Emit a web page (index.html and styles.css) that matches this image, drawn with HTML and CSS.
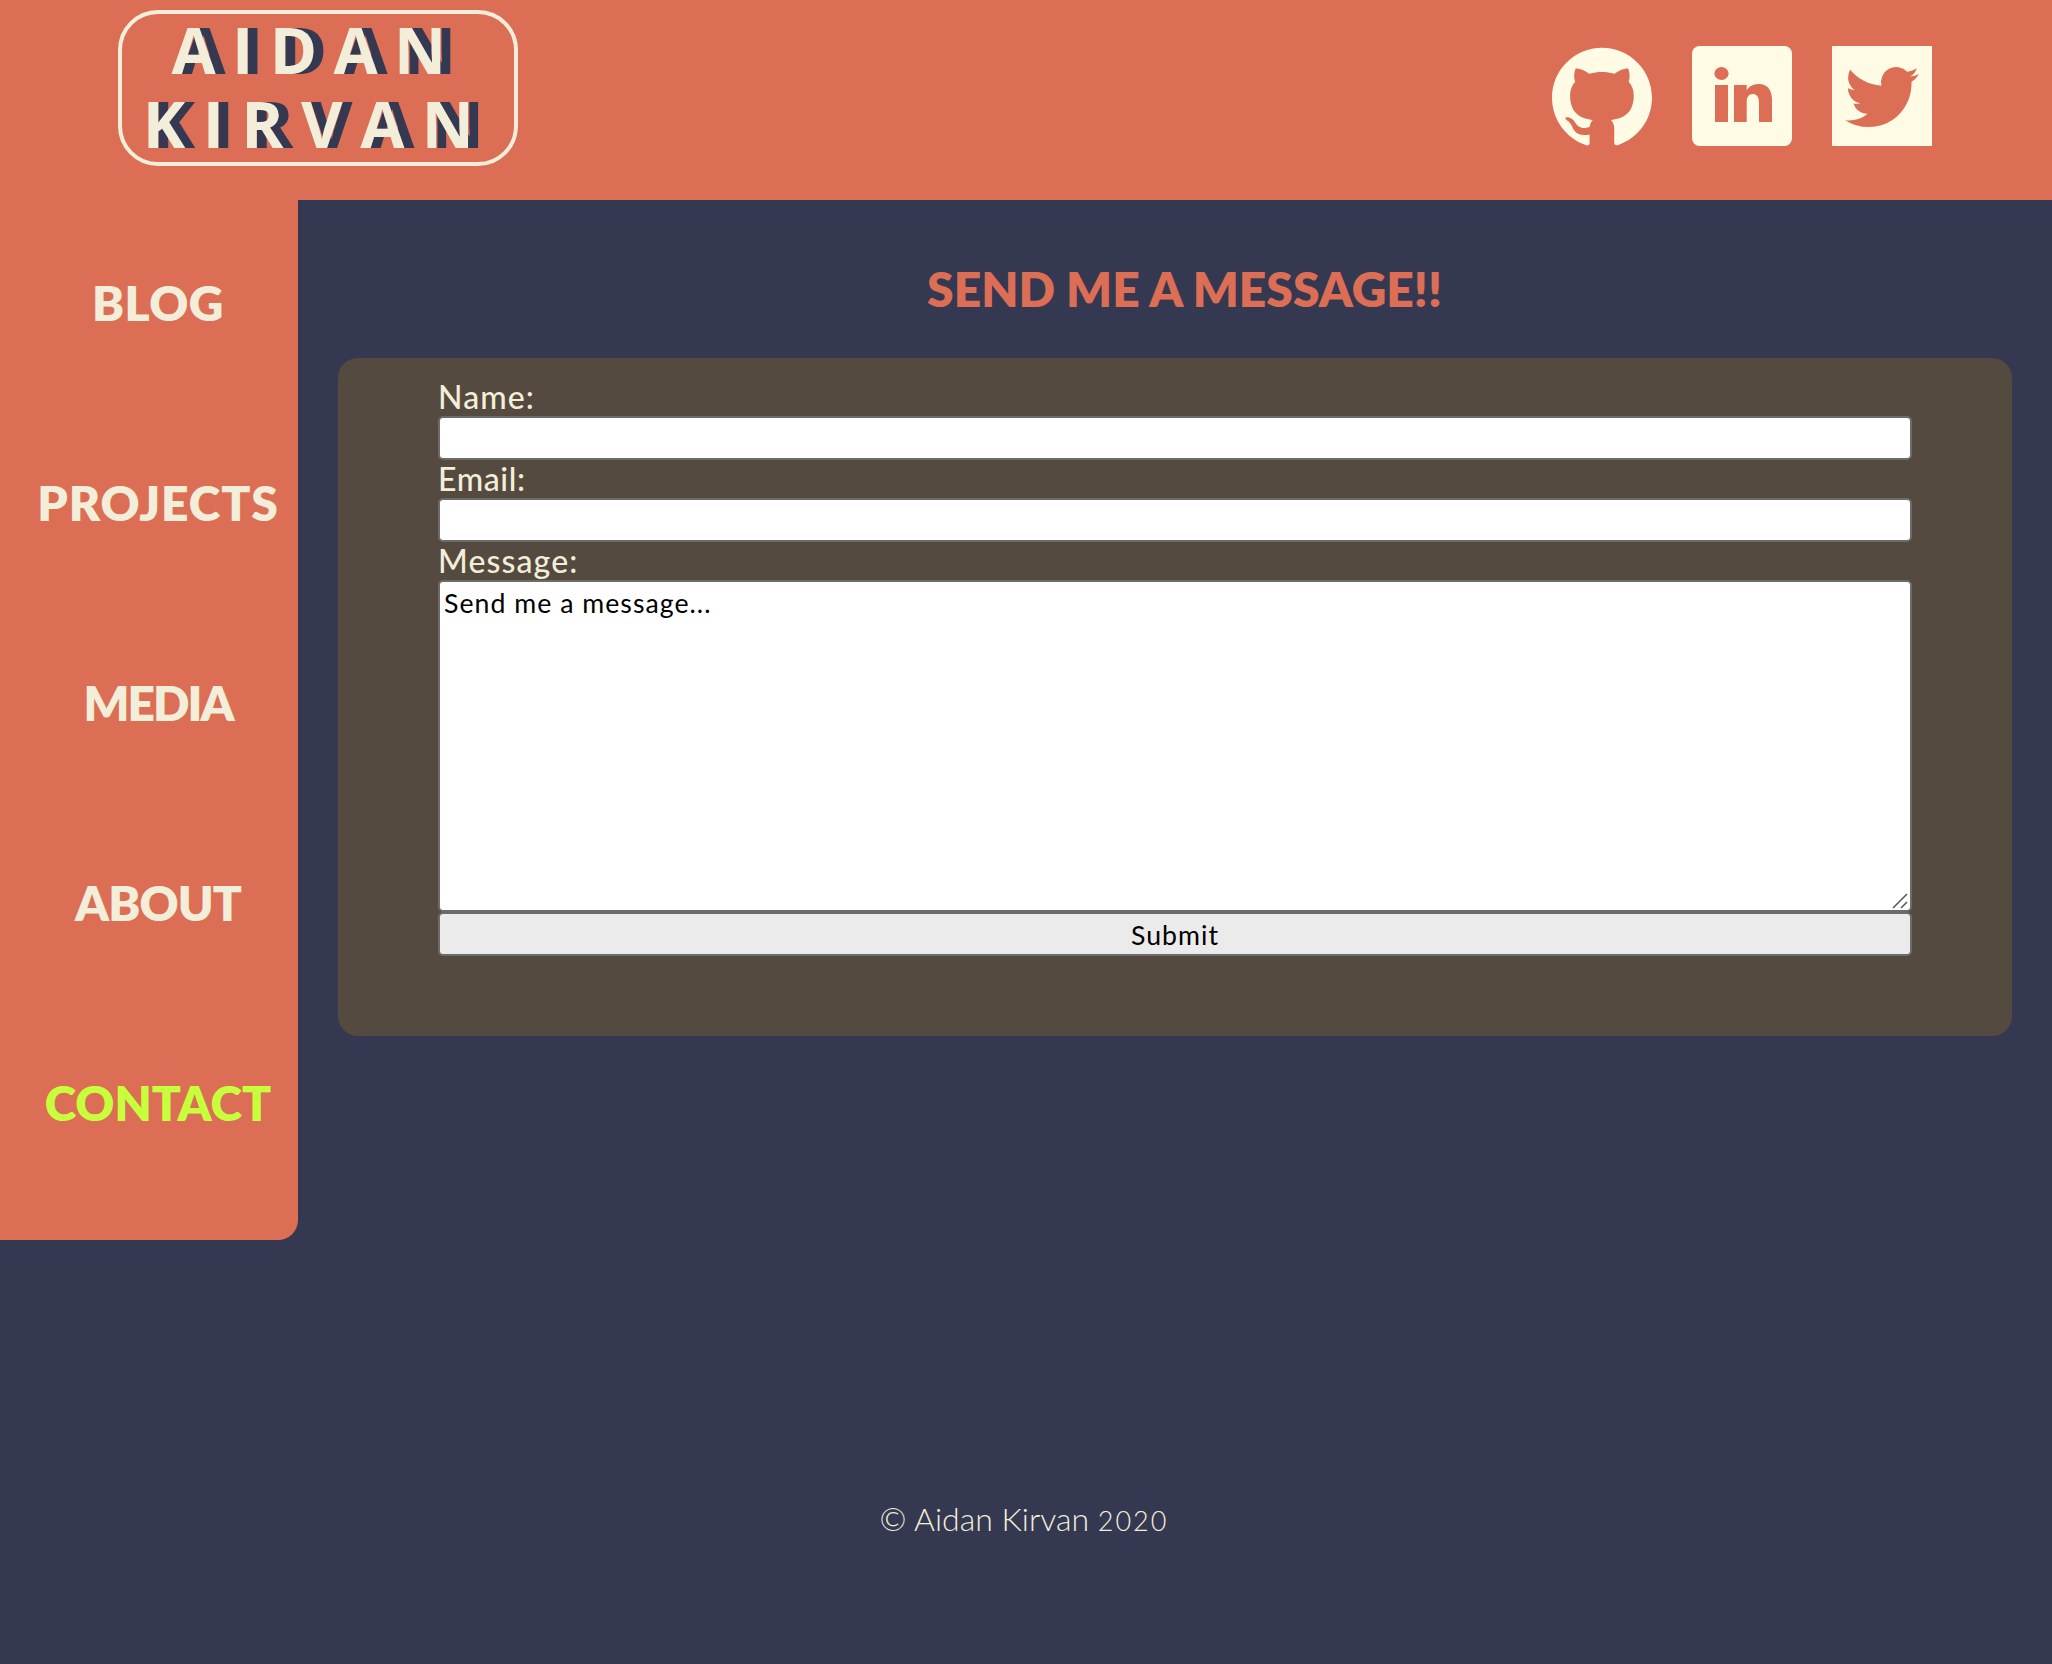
FILE: index.html
```html
<!DOCTYPE html>
<html lang="en">
<head>
<meta charset="utf-8">
<title>Aidan Kirvan - Contact</title>
<link rel="stylesheet" href="styles.css">
</head>
<body>
<header class="header">
  <a class="logo"><span class="first">AIDAN</span><span class="last">KIRVAN</span></a>
  <div class="social">
    <svg class="social-icon" viewBox="0 -0.15 24 24" aria-label="GitHub"><path d="M12 .297c-6.63 0-12 5.373-12 12 0 5.303 3.438 9.8 8.205 11.385.6.113.82-.258.82-.577 0-.285-.01-1.04-.015-2.04-3.338.724-4.042-1.61-4.042-1.61C4.422 18.07 3.633 17.7 3.633 17.7c-1.087-.744.084-.729.084-.729 1.205.084 1.838 1.236 1.838 1.236 1.07 1.835 2.809 1.305 3.495.998.108-.776.417-1.305.76-1.605-2.665-.3-5.466-1.332-5.466-5.93 0-1.31.465-2.38 1.235-3.22-.135-.303-.54-1.523.105-3.176 0 0 1.005-.322 3.3 1.23.96-.267 1.98-.399 3-.405 1.02.006 2.04.138 3 .405 2.28-1.552 3.285-1.23 3.285-1.23.645 1.653.24 2.873.12 3.176.765.84 1.23 1.91 1.23 3.22 0 4.61-2.805 5.625-5.475 5.92.42.36.81 1.096.81 2.22 0 1.606-.015 2.896-.015 3.286 0 .315.21.69.825.57C20.565 22.092 24 17.592 24 12.297c0-6.627-5.373-12-12-12"/></svg>
    <svg class="social-icon" viewBox="0 0 100 100" aria-label="LinkedIn"><rect width="100" height="100" rx="7.5"/><g class="cutout"><ellipse cx="29.5" cy="27.5" rx="7.1" ry="6.5"/><path d="M23 39h13v37H23zM42 39h12.7v5.4c1.8-3.2 5.6-6.4 11.8-6.4C76 38 80 44.500 80 54v22H67V57c0-5.400-1.700-9-6-9-4.600 0-6.300 3.500-6.300 8v20H42z"/></g></svg>
    <svg class="social-icon" viewBox="0 0 100 100" aria-label="Twitter"><rect width="100" height="100"/><path class="cutout" transform="translate(13.100 14.100) scale(3.080)" d="M23.953 4.57a10 10 0 01-2.825.775 4.958 4.958 0 002.163-2.723c-.951.555-2.005.959-3.127 1.184a4.92 4.92 0 00-8.384 4.482C7.69 8.095 4.067 6.13 1.64 3.162a4.822 4.822 0 00-.666 2.475c0 1.71.87 3.213 2.188 4.096a4.904 4.904 0 01-2.228-.616v.06a4.923 4.923 0 003.946 4.827 4.996 4.996 0 01-2.212.085 4.936 4.936 0 004.604 3.417 9.867 9.867 0 01-6.102 2.105c-.39 0-.779-.023-1.17-.067a13.995 13.995 0 007.557 2.209c9.053 0 13.998-7.496 13.998-13.985 0-.21 0-.42-.015-.63A9.935 9.935 0 0024 4.59z"/></svg>
  </div>
</header>
<div class="content">
  <nav class="sidebar">
    <a class="nav-link blog">BLOG</a>
    <a class="nav-link projects">PROJECTS</a>
    <a class="nav-link media">MEDIA</a>
    <a class="nav-link about">ABOUT</a>
    <a class="nav-link contact active">CONTACT</a>
  </nav>
  <main class="main">
    <h1 class="title">SEND ME A MESSAGE!!</h1>
    <form class="card">
      <label class="label" for="name">Name:</label>
      <input class="field" id="name" type="text">
      <label class="label email" for="email">Email:</label>
      <input class="field" id="email" type="text">
      <label class="label" for="message">Message:</label>
      <div class="message">
        <textarea class="field area" id="message">Send me a message...</textarea>
        <svg class="grip" viewBox="0 0 16 16"><path d="M1 15 15 1M9 15l6-6"/></svg>
      </div>
      <button class="field submit" type="button">Submit</button>
    </form>
  </main>
</div>
<footer class="footer">© Aidan Kirvan <span class="year">2020</span></footer>
</body>
</html>
```
FILE: styles.css
```css
* { box-sizing: border-box; }

body {
  margin: 0;
  height: 1664px;
  background: #353851;
  color: #f2eed9;
  font-family: Lato, sans-serif;
}

.header {
  display: flex;
  justify-content: space-between;
  align-items: flex-start;
  height: 200px;
  padding: 10px 120px 0 118px;
  background: #dc6e55;
}

.logo {
  display: flex;
  flex-direction: column;
  align-items: center;
  width: 400px;
  height: 156px;
  padding-right: 2px;
  border: 4px solid #f2eed9;
  border-radius: 40px;
  font: 700 64px/74px "Open Sans", sans-serif;
  font-kerning: none;
  text-shadow: 10px 0 #353851;
}

.first {
  height: 74px;
  line-height: 72px;
  letter-spacing: 16.4px;
}

.last {
  line-height: 72px;
  letter-spacing: 17.5px;
}

.social {
  display: flex;
  gap: 40px;
  padding-top: 36px;
}

.social-icon {
  width: 100px;
  height: 100px;
  fill: #fffbe4;
}

.cutout { fill: #dc6e55; }

.content {
  display: flex;
  align-items: flex-start;
  height: 1290px;
}

.sidebar {
  display: flex;
  flex-direction: column;
  width: 298px;
  height: 1040px;
  padding: 3px 2px 0 20px;
  border-bottom-right-radius: 20px;
  background: #dc6e55;
}

.nav-link {
  height: 200px;
  font-size: 48px;
  font-weight: 800;
  line-height: 200px;
  text-align: center;
}

.blog { letter-spacing: 0.4px; }
.projects { letter-spacing: 0.9px; }
.media { letter-spacing: -2px; }
.about { letter-spacing: -0.9px; }
.active { color: #c8ff3c; }

.main {
  flex: 1;
  padding: 60px 40px 0;
}

.title {
  margin: 0 0 41px;
  padding-left: 19px;
  color: #dc6e55;
  font-size: 48px;
  font-weight: 800;
  line-height: 57px;
  text-align: center;
}

.card {
  display: flex;
  flex-direction: column;
  height: 678px;
  padding: 20px 100px 0;
  border-radius: 20px;
  background: #544a3f;
}

.label {
  height: 38px;
  font-size: 32px;
  font-weight: 500;
  line-height: 37px;
  letter-spacing: 1.1px;
}

.email { letter-spacing: 0.6px; }

.field {
  display: block;
  width: 100%;
  height: 44px;
  margin: 0;
  padding: 3px 4px 1px;
  border: 2px solid #6b6b6b;
  border-radius: 5px;
  background: #fff;
  color: #000;
  font: 400 26.67px/36px Lato, sans-serif;
  letter-spacing: 1.03px;
}

.message { position: relative; }

.area {
  height: 332px;
  resize: none;
}

.grip {
  position: absolute;
  right: 4px;
  bottom: 3px;
  width: 16px;
  height: 16px;
  fill: none;
  stroke: #555;
  stroke-width: 1.5;
}

.submit {
  background: #ebebeb;
  text-align: center;
}

.footer {
  padding-right: 4px;
  font-size: 32px;
  font-weight: 300;
  line-height: 58px;
  text-align: center;
}

.year {
  font-size: 27px;
  letter-spacing: 2px;
}
```
